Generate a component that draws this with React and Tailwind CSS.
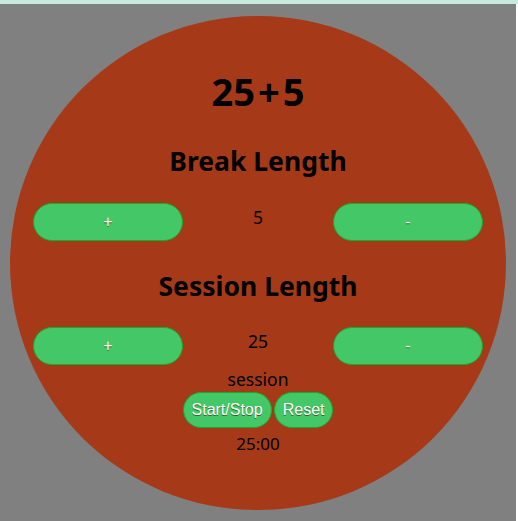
import React, { useState } from 'react';

const btn =
  "bg-[#44c767] border border-[#18ab29] rounded-full text-white [font-family:'Liberation_Sans',Arial,sans-serif] text-[16px] leading-[18px] [text-shadow:0px_1px_0px_#2f6627] cursor-pointer";

const App = () => {
  const [breakLen, setBreakLen] = useState(5);
  const [sessionLen, setSessionLen] = useState(25);

  return (
    <div className="w-[518px] h-[521px] bg-white overflow-hidden [font-family:'Noto_Sans',sans-serif] text-black">
      <div className="h-[4px] bg-[#c8e9de]" />
      <div className="w-[516px] h-[517px] bg-[#808080] pt-[12px] pl-[10px]">
        <div className="w-[496px] h-[494px] rounded-full bg-[#a63a18] pt-[55px] flex flex-col items-center">
          <h1 className="h-[40px] flex items-center justify-center text-[38px] font-bold">
            <span>25</span>
            <span className="mx-[3px]">+</span>
            <span>5</span>
          </h1>

          <h2 className="h-[40px] mt-[31px] flex items-center justify-center text-[26.5px] font-bold">Break Length</h2>
          <div className="mt-[21px] grid grid-cols-[150px_150px_150px] items-start">
            <button className={`${btn} h-[38px]`} onClick={() => setBreakLen(breakLen + 1)}>+</button>
            <div className="h-[28px] flex items-center justify-center text-[17.5px]">{breakLen}</div>
            <button className={`${btn} h-[38px]`} onClick={() => setBreakLen(breakLen - 1)}>-</button>
          </div>

          <h2 className="h-[40px] mt-[26px] flex items-center justify-center text-[26.5px] font-bold">Session Length</h2>
          <div className="mt-[20px] grid grid-cols-[150px_150px_150px] items-start">
            <button className={`${btn} h-[38px]`} onClick={() => setSessionLen(sessionLen + 1)}>+</button>
            <div className="h-[28px] flex items-center justify-center text-[17.5px]">{sessionLen}</div>
            <button className={`${btn} h-[38px]`} onClick={() => setSessionLen(sessionLen - 1)}>-</button>
          </div>

          <div className="h-[22px] mt-[3px] flex items-center justify-center text-[17.5px]">session</div>
          <div className="flex gap-[2px] mt-[2px]">
            <button className={`${btn} h-[36px] px-[8px]`}>Start/Stop</button>
            <button className={`${btn} h-[36px] px-[8px]`}>Reset</button>
          </div>
          <div className="h-[22px] mt-[5px] flex items-center justify-center text-[17px]">{`${sessionLen}:00`}</div>
        </div>
      </div>
    </div>
  );
};

export default App;
